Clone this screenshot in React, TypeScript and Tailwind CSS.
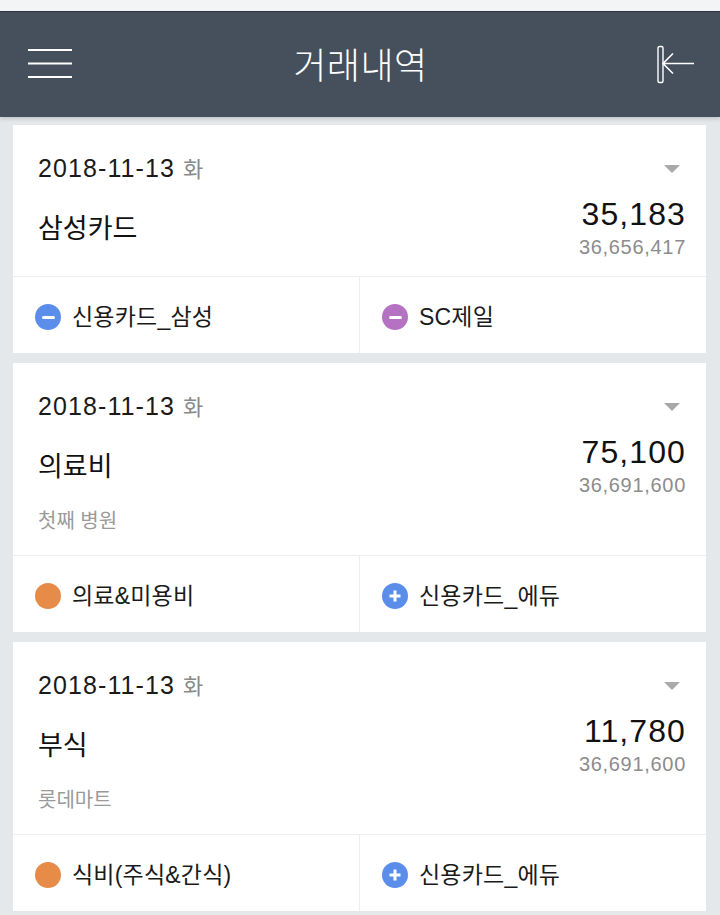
import React from "react";

type Tag = { color: string; sign: "minus" | "plus" | "none"; label: string };

type Entry = {
  date: string;
  day: string;
  title: string;
  amount: string;
  balance: string;
  memo?: string;
  from: Tag;
  to: Tag;
};

const entries: Entry[] = [
  {
    date: "2018-11-13",
    day: "화",
    title: "삼성카드",
    amount: "35,183",
    balance: "36,656,417",
    from: { color: "bg-[#5b8eea]", sign: "minus", label: "신용카드_삼성" },
    to: { color: "bg-[#b672c2]", sign: "minus", label: "SC제일" },
  },
  {
    date: "2018-11-13",
    day: "화",
    title: "의료비",
    amount: "75,100",
    balance: "36,691,600",
    memo: "첫째 병원",
    from: { color: "bg-[#e68b48]", sign: "none", label: "의료&미용비" },
    to: { color: "bg-[#5b8eea]", sign: "plus", label: "신용카드_에듀" },
  },
  {
    date: "2018-11-13",
    day: "화",
    title: "부식",
    amount: "11,780",
    balance: "36,691,600",
    memo: "롯데마트",
    from: { color: "bg-[#e68b48]", sign: "none", label: "식비(주식&간식)" },
    to: { color: "bg-[#5b8eea]", sign: "plus", label: "신용카드_에듀" },
  },
];

const font = { fontFamily: '"Liberation Sans", "Noto Sans CJK KR", sans-serif' };

function TagCell({ tag, border }: { tag: Tag; border?: boolean }) {
  return (
    <div
      className={`flex-1 flex items-center pl-[22px] pt-[4px] gap-[11px] ${
        border ? "border-l border-[#eceef0]" : ""
      }`}
    >
      <div
        className={`w-[26px] h-[26px] rounded-full ${tag.color} flex items-center justify-center shrink-0`}
      >
        {tag.sign === "minus" && <div className="w-[13px] h-[3px] bg-white rounded-sm" />}
        {tag.sign === "plus" && (
          <svg width="14" height="14" viewBox="0 0 14 14">
            <path d="M7 1.5v11M1.5 7h11" stroke="white" strokeWidth="3" />
          </svg>
        )}
      </div>
      <span className="text-[23px] text-[#1a1a1a] leading-none tracking-[0.2px]">{tag.label}</span>
    </div>
  );
}

function EntryCard({ entry }: { entry: Entry }) {
  return (
    <div className="bg-white">
      <div
        className={`pl-[25px] pr-[20px] pt-[29px] border-b border-[#eceef0] ${
          entry.memo ? "pb-[20px]" : "pb-[17px]"
        }`}
      >
        <div className="flex items-center justify-between h-[30px]">
          <div className="text-[25px] text-[#1a1a1a] leading-[30px] tracking-[1.1px]">
            {entry.date} <span className="text-[22px] text-[#8a8a8a] tracking-normal">{entry.day}</span>
          </div>
          <svg width="16" height="8" viewBox="0 0 16 8" className="mr-[6px]">
            <path d="M0 0h16L8 8z" fill="#a9a9a9" />
          </svg>
        </div>
        <div className="flex items-center justify-between mt-[12px]">
          <div className="text-[27px] text-[#111] leading-none pt-[4px]">{entry.title}</div>
          <div className="flex flex-col items-end">
            <div className="text-[32px] text-[#111] leading-[36px] tracking-[1.1px]">{entry.amount}</div>
            <div className="text-[20px] text-[#8c8c8c] leading-[24px] mt-[3px] tracking-[0.7px]">
              {entry.balance}
            </div>
          </div>
        </div>
        {entry.memo && (
          <div className="text-[20px] text-[#9a9a9a] leading-[28px] mt-[10px]">{entry.memo}</div>
        )}
      </div>
      <div className="flex h-[76px]">
        <TagCell tag={entry.from} />
        <TagCell tag={entry.to} border />
      </div>
    </div>
  );
}

export default function App() {
  return (
    <div className="w-[720px] h-[915px] overflow-hidden bg-[#e4e8eb]" style={font}>
      <div className="h-[12px] bg-[#f2f4f6] border-b border-[#2f3640]" />
      <header className="h-[105px] bg-[#46505d] flex items-center justify-between px-[28px] shadow-[0_2px_4px_rgba(0,0,0,0.15)]">
        <svg width="44" height="32" viewBox="0 0 44 32" className="-mt-[4px]">
          <path d="M0 3h44M0 16.5h44M0 30h44" stroke="white" strokeWidth="2.2" />
        </svg>
        <h1
          className="text-[36px] font-extralight text-white tracking-[0.5px] -mt-[3px] -ml-[6px]"
          style={{ fontFamily: '"Noto Sans CJK KR", sans-serif' }}
        >
          거래내역
        </h1>
        <svg width="40" height="40" viewBox="0 0 40 40" className="-mr-[3px]">
          <rect x="3" y="1.5" width="5" height="36" rx="1.5" fill="none" stroke="white" strokeWidth="1.4" />
          <path d="M8 18.5h31M18 8.5 8 18.5l10 10" fill="none" stroke="white" strokeWidth="1.6" />
        </svg>
      </header>
      <div className="flex flex-col gap-[10px] pt-[8px] px-[13px] pr-[14px]">
        {entries.map((e, i) => (
          <EntryCard key={i} entry={e} />
        ))}
      </div>
    </div>
  );
}
